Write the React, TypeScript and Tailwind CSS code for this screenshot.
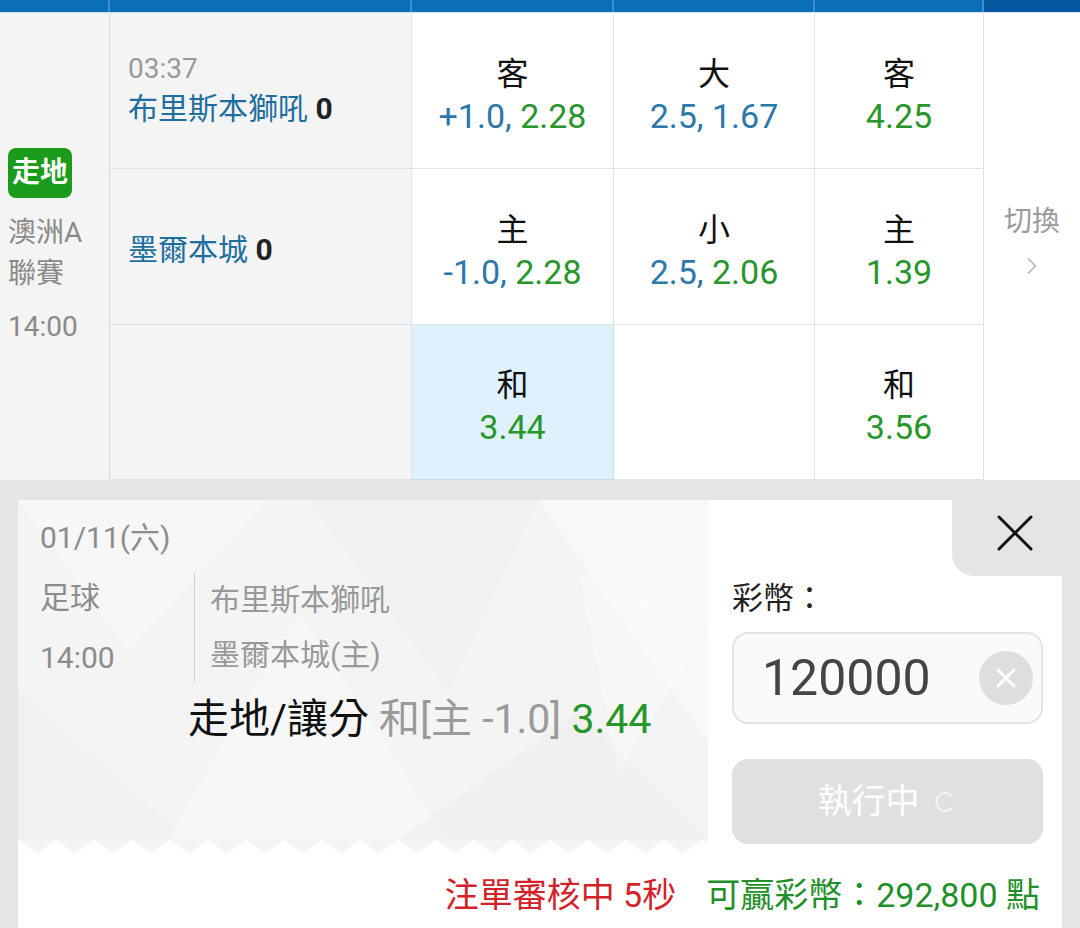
import React from 'react';
import { ChevronRight } from 'lucide-react';

type Tone = 'blue' | 'green';

interface OddsCellProps {
  label?: string;
  parts?: { text: string; tone: Tone }[];
  active?: boolean;
}

const toneClass: Record<Tone, string> = {
  blue: 'text-[#2b78ab]',
  green: 'text-[#27962b]',
};

const OddsCell: React.FC<OddsCellProps> = ({ label, parts = [], active }) => (
  <div
    className={`flex flex-col items-center justify-center border-r border-b pt-[8px] ${
      active ? 'bg-[#dff1fc] border-[#c8dceb]' : 'bg-white border-[#e3e3e3]'
    }`}
  >
    {label && (
      <>
        <div className="text-[32px] leading-[42px] text-[#111]">{label}</div>
        <div className="text-[34px] leading-[42px]">
          {parts.map((p, i) => (
            <span key={i} className={toneClass[p.tone]}>
              {p.text}
            </span>
          ))}
        </div>
      </>
    )}
  </div>
);

const TeamCell: React.FC<{ time?: string; team?: string; score?: string }> = ({ time, team, score }) => (
  <div
    className={`flex flex-col justify-center border-r border-b border-[#dde2e6] bg-[#f4f4f4] pl-[18px] ${
      time ? 'pb-[4px]' : 'pt-[6px]'
    }`}
  >
    {time && <div className="text-[28px] leading-[40px] text-[#9a9a9a]">{time}</div>}
    {team && (
      <div className="text-[30px] leading-[40px] text-[#1e6f9f]">
        {team} <span className="font-bold text-[#222]">{score}</span>
      </div>
    )}
  </div>
);

// zigzag edge at the bottom of the ticket
const zigzag = (() => {
  let d = 'M0,0';
  for (let x = 0; x < 690; x += 38) {
    d += ` L${x + 19},13 L${x + 38},0`;
  }
  return d + ' Z';
})();

export default function App() {
  return (
    <div className="h-[928px] w-[1080px] overflow-hidden bg-[#e5e5e5] font-['Roboto','Noto_Sans_CJK_TC',sans-serif]">
      {/* header strip */}
      <div className="flex h-[13px] border-b border-[#cfe3f1]">
        <div className="h-full w-[110px] border-r-2 border-[#3f8fcc] bg-[#0b6fb8]" />
        <div className="h-full w-[302px] border-r-2 border-[#3f8fcc] bg-[#0b6fb8]" />
        <div className="h-full w-[202px] border-r-2 border-[#3f8fcc] bg-[#0b6fb8]" />
        <div className="h-full w-[201px] border-r-2 border-[#3f8fcc] bg-[#0b6fb8]" />
        <div className="h-full w-[169px] border-r-2 border-[#3f8fcc] bg-[#0b6fb8]" />
        <div className="h-full flex-1 bg-[#0657a1]" />
      </div>

      {/* match table */}
      <div className="grid grid-cols-[110px_302px_202px_201px_169px_1fr] grid-rows-[156px_156px_155px]">
        <div className="row-span-3 flex flex-col justify-center border-r border-[#dcdcdc] bg-[#f4f4f4] pl-[8px] pt-[2px]">
          <div className="flex h-[50px] w-[64px] items-center justify-center rounded-[8px] bg-[#1a9c1a] text-[28px] font-bold text-white">
            走地
          </div>
          <div className="mt-[14px] text-[28px] leading-[41px] text-[#8a8a8a]">
            澳洲A
            <br />
            聯賽
          </div>
          <div className="mt-[12px] text-[28px] leading-[41px] text-[#8a8a8a]">14:00</div>
        </div>

        <TeamCell time="03:37" team="布里斯本獅吼" score="0" />
        <OddsCell
          label="客"
          parts={[
            { text: '+1.0, ', tone: 'blue' },
            { text: '2.28', tone: 'green' },
          ]}
        />
        <OddsCell
          label="大"
          parts={[
            { text: '2.5, ', tone: 'blue' },
            { text: '1.67', tone: 'blue' },
          ]}
        />
        <OddsCell label="客" parts={[{ text: '4.25', tone: 'green' }]} />

        <div className="row-span-3 flex flex-col items-center justify-center bg-white pb-[12px]">
          <div className="text-[28px] leading-[40px] text-[#9b9b9b]">切換</div>
          <ChevronRight size={28} strokeWidth={1.5} className="mt-[10px] text-[#b5b5b5]" />
        </div>

        <TeamCell team="墨爾本城" score="0" />
        <OddsCell
          label="主"
          parts={[
            { text: '-1.0, ', tone: 'blue' },
            { text: '2.28', tone: 'green' },
          ]}
        />
        <OddsCell
          label="小"
          parts={[
            { text: '2.5, ', tone: 'blue' },
            { text: '2.06', tone: 'green' },
          ]}
        />
        <OddsCell label="主" parts={[{ text: '1.39', tone: 'green' }]} />

        <TeamCell />
        <OddsCell label="和" parts={[{ text: '3.44', tone: 'green' }]} active />
        <OddsCell />
        <OddsCell label="和" parts={[{ text: '3.56', tone: 'green' }]} />
      </div>

      {/* bet slip */}
      <div className="mx-[18px] mt-[20px] bg-white">
        <div className="flex">
          <div className="flex w-[690px] flex-col">
            <div className="relative flex-1 bg-[#f4f4f4]">
              <svg className="absolute inset-0 h-full w-full" viewBox="0 0 690 338" preserveAspectRatio="none">
                <polygon points="0,0 250,0 110,150" fill="#ffffff" opacity="0.3" />
                <polygon points="290,0 520,0 430,190" fill="#ececec" opacity="0.35" />
                <polygon points="520,0 690,0 690,240" fill="#ffffff" opacity="0.35" />
                <polygon points="0,190 170,338 0,338" fill="#eeeeee" opacity="0.5" />
                <polygon points="150,338 280,110 430,338" fill="#ffffff" opacity="0.3" />
                <polygon points="380,338 560,210 690,338" fill="#ececec" opacity="0.4" />
                <polygon points="560,70 690,130 600,270" fill="#ffffff" opacity="0.25" />
              </svg>
              <div className="relative pl-[22px] pt-[18px] text-[30px] text-[#8c8c8c]">
                <div className="leading-[40px]">01/11(六)</div>
                <div className="mt-[10px] flex items-start">
                  <div className="w-[154px] leading-[60px]">
                    足球
                    <br />
                    14:00
                  </div>
                  <div className="mt-[4px] border-l border-[#d2d2d2] pl-[15px] leading-[55px] text-[#999]">
                    布里斯本獅吼
                    <br />
                    墨爾本城(主)
                  </div>
                </div>
                <div className="ml-[148px] mt-[6px] text-[41px] leading-[50px]">
                  <span className="text-[#111]">走地/讓分</span>
                  <span className="text-[#9a9a9a]"> 和[主 -1.0] </span>
                  <span className="text-[#27962b]">3.44</span>
                </div>
              </div>
            </div>
            <svg className="block" width="690" height="13" viewBox="0 0 690 13">
              <path d={zigzag} fill="#f4f4f4" />
            </svg>
          </div>

          <div className="flex flex-1 flex-col">
            <div className="flex justify-end">
              <div className="h-[76px] w-[110px] rounded-bl-[22px] bg-[#e5e5e5] pl-[43px] pt-[13px]">
                <svg width="40" height="40" viewBox="0 0 40 40">
                  <path d="M4 4 L36 36 M36 4 L4 36" stroke="#111" strokeWidth="3" strokeLinecap="round" />
                </svg>
              </div>
            </div>
            <div className="pb-[9px] pl-[24px] pr-[19px]">
              <div className="mt-[3px] text-[31px] leading-[40px] text-[#222]">彩幣：</div>
              <div className="mt-[13px] flex h-[92px] items-center rounded-[16px] border-2 border-[#e3e3e3] bg-[#fafafa] pl-[28px] pr-[8px]">
                <div className="flex-1 text-[50px] text-[#444]">120000</div>
                <div className="flex h-[54px] w-[54px] items-center justify-center rounded-full bg-[#dedede]">
                  <svg width="22" height="22" viewBox="0 0 22 22">
                    <path d="M3 3 L19 19 M19 3 L3 19" stroke="#fff" strokeWidth="3" strokeLinecap="round" />
                  </svg>
                </div>
              </div>
              <div className="mt-[35px] flex h-[85px] items-center justify-center rounded-[16px] bg-[#e0e0e0] text-[34px] text-white">
                <span>執行中</span>
                <svg className="ml-[14px]" width="24" height="24" viewBox="0 0 24 24">
                  <path d="M18 18 A9 9 0 1 1 18 6" stroke="#f4f4f4" strokeWidth="2" fill="none" strokeLinecap="round" />
                </svg>
              </div>
            </div>
          </div>
        </div>

        <div className="flex justify-end pb-[20px] pr-[22px] pt-[20px] text-[34px] leading-[44px]">
          <span className="text-[#d3222a]">注單審核中 5秒</span>
          <span className="ml-[30px] text-[#22902a]">可贏彩幣：292,800 點</span>
        </div>
      </div>
    </div>
  );
}
